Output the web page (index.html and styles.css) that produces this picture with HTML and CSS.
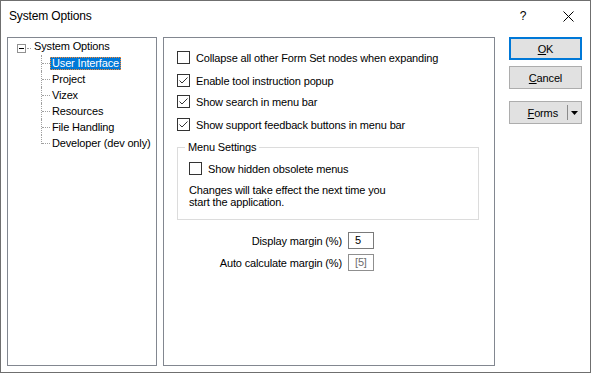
FILE: index.html
```html
<!DOCTYPE html>
<html>
<head>
<meta charset="utf-8">
<link rel="stylesheet" href="styles.css">
</head>
<body>
<div class="window">
  <div class="titlebar">
    <span class="title">System Options</span>
    <span class="help">?</span>
    <span class="close"><svg width="11" height="11" viewBox="0 0 11 11"><path d="M0.5 0.5 L10.5 10.5 M10.5 0.5 L0.5 10.5" stroke="#000" stroke-width="1" fill="none"/></svg></span>
  </div>
  <div class="body">
    <div class="panel tree">
      <div class="node root">
        <span class="expander"><svg width="9" height="9" viewBox="0 0 9 9"><rect x="0.5" y="0.5" width="8" height="8" fill="#fff" stroke="#919191"/><path d="M2 4.5 H7" stroke="#000"/></svg></span>
        <span class="hdots"></span>
        <span class="label">System Options</span>
      </div>
      <div class="children">
        <div class="node child"><span class="conn"></span><span class="label selected">User Interface</span></div>
        <div class="node child"><span class="conn"></span><span class="label">Project</span></div>
        <div class="node child"><span class="conn"></span><span class="label">Vizex</span></div>
        <div class="node child"><span class="conn"></span><span class="label">Resources</span></div>
        <div class="node child"><span class="conn"></span><span class="label">File Handling</span></div>
        <div class="node child last"><span class="conn"></span><span class="label">Developer (dev only)</span></div>
      </div>
    </div>
    <div class="panel content">
      <div class="check r1"><span class="box"></span><span class="text">Collapse all other Form Set nodes when expanding</span></div>
      <div class="check r2"><span class="box"><svg width="11" height="11" viewBox="0 0 11 11"><path d="M1.5 5.5 L4 8 L9.5 2.5" stroke="#333" fill="none"/></svg></span><span class="text">Enable tool instruction popup</span></div>
      <div class="check r3"><span class="box"><svg width="11" height="11" viewBox="0 0 11 11"><path d="M1.5 5.5 L4 8 L9.5 2.5" stroke="#333" fill="none"/></svg></span><span class="text">Show search in menu bar</span></div>
      <div class="check r4"><span class="box"><svg width="11" height="11" viewBox="0 0 11 11"><path d="M1.5 5.5 L4 8 L9.5 2.5" stroke="#333" fill="none"/></svg></span><span class="text">Show support feedback buttons in menu bar</span></div>
      <fieldset class="group">
        <legend>Menu Settings</legend>
        <div class="check"><span class="box"></span><span class="text">Show hidden obsolete menus</span></div>
        <p class="note">Changes will take effect the next time you<br>start the application.</p>
      </fieldset>
      <div class="margins">
        <span class="mlabel">Display margin (%)</span>
        <span class="field">5</span>
        <span class="mlabel">Auto calculate margin (%)</span>
        <span class="field auto">[5]</span>
      </div>
    </div>
    <div class="buttons">
      <div class="btn default"><span><u>O</u>K</span></div>
      <div class="btn cancel"><span><u>C</u>ancel</span></div>
      <div class="btn forms"><span class="ftext"><u>F</u>orms</span><span class="sep"></span><span class="arrow"><svg width="7" height="4" viewBox="0 0 7 4"><path d="M0 0 H7 L3.5 4 Z" fill="#000"/></svg></span></div>
    </div>
  </div>
</div>
</body>
</html>
```
FILE: styles.css
```css
html, body {
  margin: 0;
  padding: 0;
  background: #fff;
}
body {
  font-family: "Liberation Sans", Arial, sans-serif;
  font-size: 11px;
  letter-spacing: -0.15px;
  color: #000;
}
.window {
  width: 591px;
  height: 373px;
  box-sizing: border-box;
  border: 1px solid #6f6f6f;
  background: #fff;
  display: flex;
  flex-direction: column;
}
.titlebar {
  height: 36px;
  flex: none;
  display: flex;
  align-items: flex-start;
  box-sizing: border-box;
  padding-top: 7px;
  padding-left: 8px;
}
.title {
  flex: 1;
  font-size: 12px;
  line-height: 16px;
}
.help {
  width: 14px;
  text-align: center;
  font-size: 12px;
  line-height: 16px;
  margin-right: 33px;
}
.close {
  display: flex;
  margin-top: 3px;
  margin-right: 16px;
}
.body {
  flex: 1;
  display: flex;
  padding: 0 8px 6px 6px;
  min-height: 0;
}
.panel {
  border: 1px solid #828790;
  box-sizing: border-box;
  background: #fff;
}
.tree {
  width: 150px;
  flex: none;
  padding-top: 1px;
  padding-left: 9px;
}
.content {
  width: 332px;
  flex: none;
  margin-left: 6px;
  padding-top: 12px;
  padding-left: 13px;
}
.buttons {
  width: 73px;
  flex: none;
  margin-left: 14px;
  display: flex;
  flex-direction: column;
}

/* tree */
.node {
  height: 16px;
  display: flex;
  align-items: flex-start;
}
.expander {
  display: flex;
  margin-top: 5px;
}
.hdots {
  width: 4px;
  margin-left: 1px;
  margin-top: 9px;
  border-top: 1px dotted #a0a0a0;
}
.root .label {
  margin-left: 1px;
}
.label {
  padding: 0 2px;
  height: 13px;
  line-height: 13px;
  margin-top: 1px;
  white-space: nowrap;
}
.children {
  margin-left: 24px;
}
.conn {
  position: relative;
  width: 9px;
  height: 16px;
  flex: none;
}
.conn::before {
  content: "";
  position: absolute;
  left: 0;
  top: 0;
  height: 16px;
  border-left: 1px dotted #a0a0a0;
}
.last .conn::before {
  height: 9px;
}
.conn::after {
  content: "";
  position: absolute;
  left: 1px;
  top: 8px;
  width: 8px;
  border-top: 1px dotted #a0a0a0;
}
.child .label {
  margin-top: 2px;
}
.label.selected {
  background: #0078d7;
  color: #fff;
  outline: 1px dotted #ff8728;
  outline-offset: -1px;
}

/* checkboxes */
.check {
  height: 15px;
  display: flex;
  align-items: center;
}
.check.r2 { margin-top: 8px; }
.check.r3 { margin-top: 6px; }
.check.r4 { margin-top: 8px; }
.box {
  width: 13px;
  height: 13px;
  box-sizing: border-box;
  border: 1px solid #333;
  background: #fff;
  display: flex;
  flex: none;
}
.text {
  margin-left: 6px;
  white-space: nowrap;
}

/* group */
.group {
  margin: 8px 0 0 0;
  width: 302px;
  box-sizing: border-box;
  border: 1px solid #dcdcdc;
  padding: 6px 0 11px 11px;
  min-width: 0;
}
.group legend {
  padding: 0 3px;
  margin-left: -4px;
  line-height: 15px;
}
.note {
  margin: 8px 0 0 0;
  line-height: 12px;
}

/* margin fields */
.margins {
  margin-top: 12px;
  display: grid;
  grid-template-columns: 165px 26px;
  column-gap: 6px;
  row-gap: 5px;
  align-items: center;
}
.mlabel {
  text-align: right;
  white-space: nowrap;
}
.field {
  height: 17px;
  box-sizing: border-box;
  border: 1px solid #7a7a7a;
  padding-left: 6px;
  line-height: 15px;
}
.field.auto {
  color: #6d6d6d;
  border-color: #8f8f8f;
}

/* buttons */
.btn {
  height: 23px;
  box-sizing: border-box;
  border: 1px solid #adadad;
  background: #e1e1e1;
  display: flex;
  align-items: center;
  justify-content: center;
}
.btn.default {
  border: 2px solid #0078d7;
}
.btn.cancel {
  margin-top: 6px;
}
.btn.forms {
  margin-top: 12px;
  justify-content: flex-end;
  padding-right: 3px;
}
.sep {
  width: 1px;
  height: 15px;
  background: #8a8a8a;
  margin-left: 9px;
}
.arrow {
  display: flex;
  margin-left: 3px;
}
```
